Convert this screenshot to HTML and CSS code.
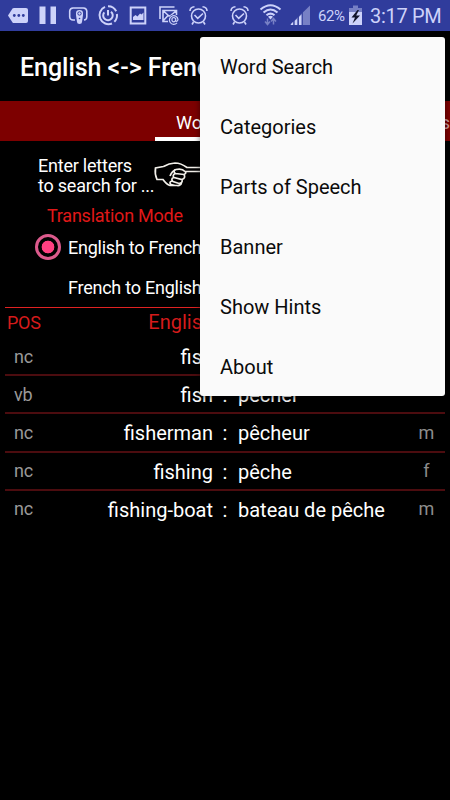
FILE: index.html
```
<!DOCTYPE html>
<html lang="en">
<head>
<meta charset="utf-8">
<title>English &lt;-&gt; French</title>
<link rel="stylesheet" href="styles.css">
</head>
<body>
<div class="screen">
  <div class="status">
    <svg width="34" height="31" viewBox="0 0 34 31"><path class="f" d="M8 15.5 12.5 8.5Q13 8 14 8H26Q28 8 28 10V21Q28 23 26 23H14Q13 23 12.5 22.5Z"/><g fill="#303c9c"><circle cx="14.3" cy="15.5" r="1.4"/><circle cx="18.8" cy="15.5" r="1.4"/><circle cx="23.3" cy="15.5" r="1.4"/></g></svg>
    <svg width="28" height="31" viewBox="34 0 28 31"><path class="f" d="M39.5 6.5H45.5V24H39.5ZM50.5 6.5H56V24H50.5Z"/></svg>
    <svg width="30" height="31" viewBox="62 0 30 31"><path class="s" d="M75 20H73Q70 20 69.700 17V11Q70 8.300 73 8H83.500Q86.500 8.300 86.800 11V17Q86.500 20 84 20"/><path class="f" d="M76 13Q76 10 79.500 10Q83 10 83 13V15L82 22Q82 24 79.500 24Q77 24 77 22L76 15Z"/><circle cx="79.500" cy="13.500" r="1.700" fill="none" stroke="#303c9c"/><circle cx="79.500" cy="18.500" r=".8" fill="#303c9c"/></svg>
    <svg width="32" height="31" viewBox="92 0 32 31"><path class="s w" d="M105 6.900A9 9 0 1 0 112 23.500M114.300 21.800A9 9 0 0 0 116.900 14M116.200 11.300A9 9 0 0 0 108 6.300M104.300 12.300A4.800 4.800 0 1 0 111 11.700M108 10V15.500"/></svg>
    <svg width="28" height="31" viewBox="124 0 28 31"><path class="s w" d="M130.700 7.500H145.300V23.500H130.700Z"/><path class="f" d="M133 20V17L135.500 15 137.500 16.500 140 13.500 141.500 14.500 143.500 12.500V20Z"/></svg>
    <svg width="32" height="31" viewBox="152 0 32 31"><path class="s" d="M160 19V7H174.500M168 21.500H163V10.500H176.500V15M163 10.500 169.500 16.500 176.500 10.500M163 21 168 15.500"/><circle cx="173.700" cy="19.800" r="5.200" fill="#303c9c"/><path class="s thin" d="M177 22.800A4.300 4.300 0 1 1 178 19.500Q177.500 22 175.800 21L175.600 18M175.500 19.700A1.800 1.800 0 1 1 172 19.700A1.800 1.800 0 1 1 175.500 19.700"/></svg>
    <svg width="30" height="31" viewBox="184 0 30 31"><g id="alarm"><circle class="s" cx="198.500" cy="16" r="7"/><path class="s" d="M190 11Q190 7 194.500 6.700M207 11Q207 7 202.500 6.700M194.500 15 197.700 18.300 203 13.500M193.500 22 192 24.500M203.500 22 205 24.500"/></g></svg>
    <svg width="40" height="31" viewBox="214 0 40 31"><use href="#alarm" x="41"/></svg>
    <svg width="30" height="31" viewBox="254 0 30 31"><path class="s w" d="M260.500 9.500Q270.500 1 280.500 9.500M263.500 12.500Q270.500 6.500 277.500 12.500M266.500 15.300Q270.500 12 274.500 15.300"/><path class="f" d="M268 16.700Q270.500 15 273 16.700L270.500 19.500Z"/><path d="M267.500 18.500V24M265 21.500 267.500 24.500 270 21.500M273.500 24.500V19M271 21.500 273.500 18.500 276 21.500" fill="none" stroke="#7780c5" stroke-width="1.500"/></svg>
    <svg width="30" height="31" viewBox="284 0 30 31"><path d="M290 25 310 5.500V25Z" fill="#7780c5"/><path class="f" d="M291 24 293 22V25H291ZM294.500 21 297 19V25H294.500ZM299 17 301.500 14.500V25H299Z"/><path stroke="#303c9c" d="M294 19V25M298.300 15V25M302.300 12V25"/></svg>
    <span class="pct">62%</span>
    <svg width="20" height="31" viewBox="346 0 20 31"><path d="M353 5.500H358V8H362V14H349V8H353Z" fill="#7780c5"/><path class="f" d="M349 12H362V25H349Z"/><path d="M357.500 10 351.500 17.500H355L352.500 23.500 360 15.500H356.200L359 10Z" fill="#11142b"/></svg>
    <span class="clock">3:17 PM</span>
  </div>
  <header class="title"><span>English &lt;-&gt; French</span></header>
  <nav class="tabs"><span class="tab active">Word</span><span class="tab next">s</span></nav>
  <section class="search">
    <p class="hint"><span>Enter letters</span><br><span>to search for ...</span></p>
    <svg class="hand" width="70" height="34" viewBox="150 158 70 34"><path d="M163.500 166.500 155.500 168Q154.500 174 157 179.500L163 179.500Q166.500 184.500 170 185.500H177Q180.500 186 181.500 183M163.500 166.500Q169 163.300 175 163Q181 163 187 167.500H215Q218 170.500 215 171.500H185M185 171.500Q182 168 176 169.500Q172 171 170 176M175 169.500Q173 172 175.500 173.500L184 174.500Q187 173 185 171.500M175 173.500Q172 175.500 174 177.500L182 179.500Q186 178 184 174.500M173.500 177.500Q170.500 179 173 181.500L179 183.500Q183 183 182 179.500M172 181Q168.500 182 171 184.500L175 185.500"/></svg>
  </section>
  <section class="modes">
    <h2><span>Translation Mode</span></h2>
    <div class="option"><i class="radio"></i><span>English to French</span></div>
    <div class="option"><i class="radio off"></i><span>French to English</span></div>
  </section>
  <section class="results">
    <div class="row head"><span class="pos">POS</span><span class="en">English</span></div>
    <div class="row first"><span class="pos">nc</span><span class="en">fish</span></div>
    <div class="row"><span class="pos">vb</span><span class="en">fish</span><span class="c">:</span><span class="fr">pêcher</span></div>
    <div class="row"><span class="pos">nc</span><span class="en">fisherman</span><span class="c">:</span><span class="fr">pêcheur</span><span class="g">m</span></div>
    <div class="row"><span class="pos">nc</span><span class="en">fishing</span><span class="c">:</span><span class="fr">pêche</span><span class="g">f</span></div>
    <div class="row"><span class="pos">nc</span><span class="en">fishing-boat</span><span class="c">:</span><span class="fr">bateau de pêche</span><span class="g">m</span></div>
  </section>
  <ul class="menu"><li>Word Search</li><li>Categories</li><li>Parts of Speech</li><li>Banner</li><li>Show Hints</li><li>About</li></ul>
</div>
</body>
</html>
```
FILE: styles.css
```
* { box-sizing: border-box; }
body { margin: 0; background: #000; font-family: Roboto, sans-serif; color: #fff; }
.screen { position: relative; width: 450px; height: 800px; overflow: hidden; background: #000; }
.status { display: flex; height: 31px; background: #303c9c; color: #cdd2fa; align-items: center; white-space: nowrap; }
.status svg { flex: none; display: block; }
.f { fill: #cdd2fa; }
.s { fill: none; stroke: #cdd2fa; stroke-width: 1.6; }
.w { stroke-width: 2; }
.thin { stroke-width: 1.2; }
.pct { width: 32px; padding-left: 4px; font-size: 15px; letter-spacing: -.4px; }
.clock { padding-left: 4px; font-size: 20px; letter-spacing: -.3px; }
.title { height: 70px; padding-left: 20px; line-height: 73px; font-size: 25px; font-weight: 500; letter-spacing: -.05px; white-space: nowrap; }
.tabs { display: flex; height: 40px; background: #7d0000; font-size: 18px; line-height: 43px; padding-left: 155px; white-space: nowrap; }
.tab { flex: none; width: 140px; }
.active { padding-left: 21px; border-bottom: 4px solid #fff; }
.next { width: 155px; text-align: right; color: #cf9c9c; }
.search { display: flex; height: 66px; padding: 15px 0 0 38px; }
.hint { margin: 0; width: 112px; font-size: 18px; line-height: 20px; letter-spacing: -.22px; white-space: nowrap; }
.hand { margin-top: 2px; fill: none; stroke: #f2f0ea; stroke-width: 1.7; }
.modes { height: 100px; }
h2 { margin: 0; padding-left: 47px; height: 20px; line-height: 18px; font-size: 18px; font-weight: 400; letter-spacing: -.24px; color: #e01818; }
.option { display: flex; align-items: center; height: 40px; padding-left: 35px; font-size: 18px; letter-spacing: -.24px; }
.radio { width: 26px; height: 26px; margin-right: 7px; border: 3px solid #dc5a8c; border-radius: 50%; background: radial-gradient(circle, #ff4081 6px, transparent 6.7px); }
.off { visibility: hidden; }
.results { margin: 0 5px; }
.row { display: grid; grid-template-columns: 60px 148px 24px 1fr 37px; align-items: center; height: 38.2px; border-top: 2px solid #4c0c0f; font-size: 20px; }
.head { height: 29px; border-top: 1px solid #e02222; color: #d51b1b; }
.first { border-top-color: transparent; }
.pos { padding-left: 9px; font-size: 18px; letter-spacing: -.3px; color: #999; }
.head .pos { padding-left: 2px; color: inherit; }
.en, .fr, .c { padding-top: 2px; }
.head .en { padding-top: 0; }
.fr { padding-left: 1px; }
.en { text-align: right; }
.c { text-align: center; }
.g { text-align: center; color: #8d8d8d; font-size: 18px; }
.menu { position: absolute; left: 200px; top: 37px; width: 245px; height: 359px; margin: 0; padding: 0; list-style: none; background: #fafafa; border-radius: 3px; box-shadow: 0 2px 6px rgba(0,0,0,.5); }
.menu li { height: 60px; line-height: 61px; padding-left: 20px; font-size: 20px; color: #0b0b0b; }
```
